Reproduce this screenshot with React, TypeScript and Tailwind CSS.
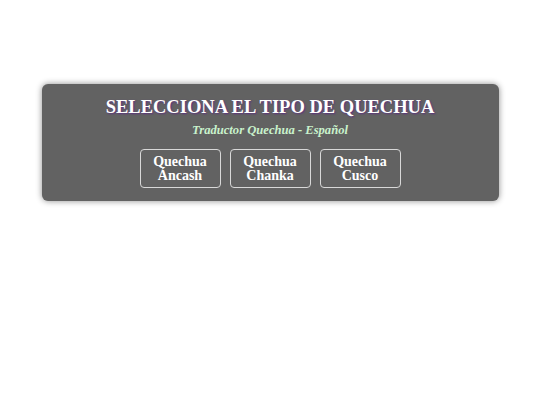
const variants = [
  ["Quechua", "Áncash"],
  ["Quechua", "Chanka"],
  ["Quechua", "Cusco"],
];

export default function App() {
  return (
    <div className="min-h-[405px] bg-white pt-[84px] font-['Liberation_Serif',Georgia,serif]">
      <div className="mx-auto flex w-[457px] flex-col items-center rounded-md bg-[#626262] pt-[11px] pb-[13px] shadow-[0_0_6px_rgba(0,0,0,0.45)]">
        <h1 className="text-[18.5px] leading-[24px] font-bold text-white [text-shadow:1px_1px_2px_#5b2d82]">
          SELECCIONA EL TIPO DE QUECHUA
        </h1>
        <p className="mt-[4px] text-[12.6px] leading-[14px] font-bold italic text-[#c9f2cc]">
          Traductor Quechua - Español
        </p>
        <div className="mt-[12px] flex gap-[9px]">
          {variants.map(([a, b]) => (
            <button
              key={b}
              className="flex h-[39px] w-[81px] flex-col items-center justify-center rounded-[4px] border border-[#d8d8d8] text-[14px] leading-[14px] font-bold text-white"
            >
              <span>{a}</span>
              <span>{b}</span>
            </button>
          ))}
        </div>
      </div>
    </div>
  );
}
